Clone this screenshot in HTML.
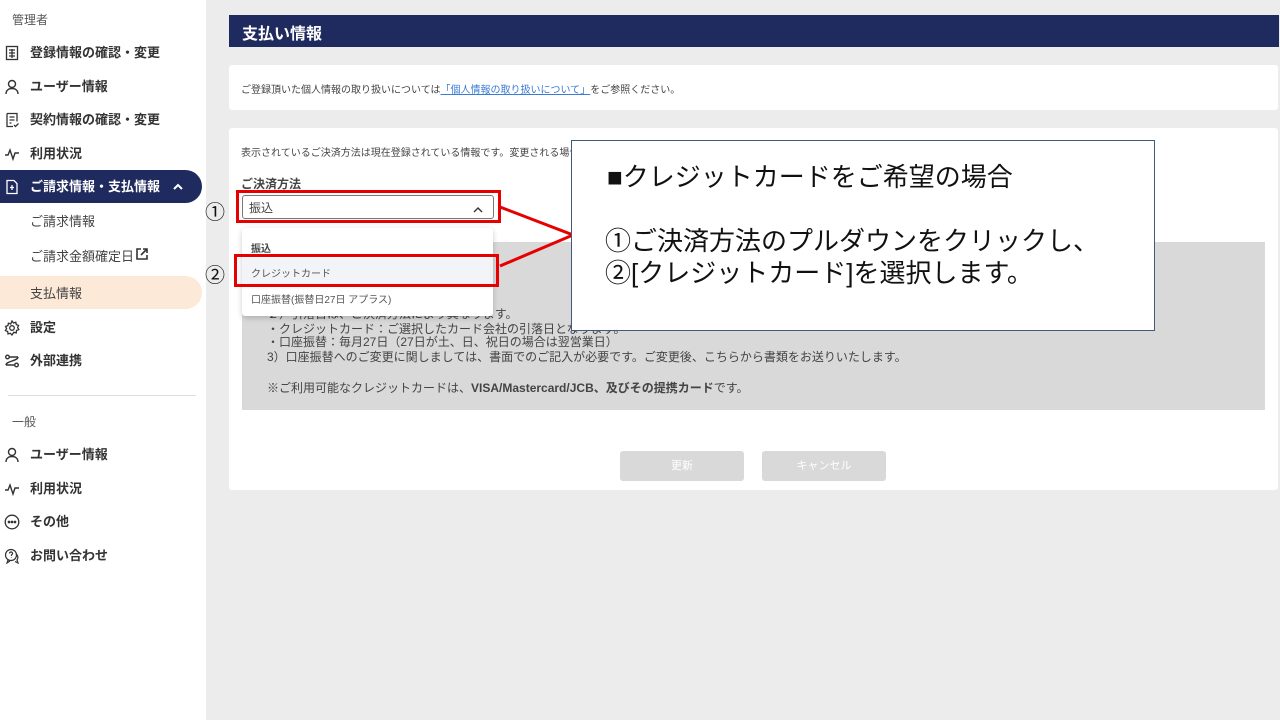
<!DOCTYPE html>
<html><head><meta charset="utf-8"><style>
*{margin:0;padding:0;box-sizing:border-box}
body{width:1280px;height:720px;position:relative;overflow:hidden;background:#ececec;font-family:"Liberation Sans","Noto Sans CJK JP",sans-serif;color:#333}
.a{position:absolute;white-space:nowrap}
#sb{position:absolute;left:0;top:0;width:206px;height:720px;background:#fff}
.it{position:absolute;left:30px;font-size:13px;font-weight:bold;color:#333;line-height:16px}
.ic{position:absolute;left:4px;width:16px;height:16px}
.sub{position:absolute;left:30px;font-size:13px;color:#444}
</style></head><body>
<div id="sb">
<div class="a" style="left:12px;top:11px;font-size:12px;color:#555">管理者</div>
<svg class="ic" style="top:45px" viewBox="0 0 16 16" fill="none" stroke="#333" stroke-width="1.3"><rect x="2.5" y="1.5" width="11" height="13"/><path d="M5 5h6M5 8h6M5 11h6M8 4v9"/></svg>
<div class="it" style="top:45px">登録情報の確認・変更</div>
<svg class="ic" style="top:79px" viewBox="0 0 16 16" fill="none" stroke="#333" stroke-width="1.4"><circle cx="8" cy="5" r="3.5"/><path d="M2 15c0-4 3-5.5 6-5.5s6 1.5 6 5.5"/></svg>
<div class="it" style="top:79px">ユーザー情報</div>
<svg class="ic" style="top:112px" viewBox="0 0 16 16" fill="none" stroke="#333" stroke-width="1.3"><path d="M3 1.5h10v8M3 1.5v13h6M5.5 5h5M5.5 8h5M5.5 11h2M10 13l1.5 1.5 3-3"/></svg>
<div class="it" style="top:112px">契約情報の確認・変更</div>
<svg class="ic" style="top:146px" viewBox="0 0 16 16" fill="none" stroke="#333" stroke-width="1.4"><path d="M1 9h3l2-5 3 9 2-6h4"/></svg>
<div class="it" style="top:146px">利用状況</div>
<div class="a" style="left:0;top:170px;width:202px;height:33px;background:#1f2a5e;border-radius:0 17px 17px 0"></div>
<svg class="ic" style="top:179px" viewBox="0 0 16 16" fill="none" stroke="#fff" stroke-width="1.3"><path d="M3 1.5h7l3 3v10H3z"/><path d="M8 6v5M6 8.5h4"/></svg>
<div class="it" style="top:179px;color:#fff">ご請求情報・支払情報</div>
<svg class="a" style="left:172px;top:182px" width="12" height="10" viewBox="0 0 12 10" fill="none" stroke="#fff" stroke-width="2"><path d="M2 7l4-4 4 4"/></svg>
<div class="sub" style="top:211px">ご請求情報</div>
<div class="sub" style="top:246px">ご請求金額確定日</div>
<svg class="a" style="left:135px;top:247px" width="14" height="14" viewBox="0 0 14 14" fill="none" stroke="#333" stroke-width="1.6"><path d="M6 2H2v10h10V8M8 2h4v4M12 2L6 8"/></svg>
<div class="a" style="left:0;top:276px;width:202px;height:33px;background:#fde9d8;border-radius:0 17px 17px 0"></div>
<div class="sub" style="top:283px">支払情報</div>
<svg class="ic" style="top:320px" viewBox="0 0 16 16" fill="none" stroke="#333" stroke-width="1.3"><circle cx="8" cy="8" r="2.3"/><path d="M8 1l1.5 2 2.3-.8.5 2.4 2.3.8-1 2.2 1.2 2-2.3.9-.3 2.4-2.4-.6L8 15l-1.6-1.7-2.4.6-.3-2.4L1.4 10.6l1.2-2-1-2.2 2.3-.8.5-2.4 2.3.8z"/></svg>
<div class="it" style="top:320px">設定</div>
<svg class="ic" style="top:353px" viewBox="0 0 16 16" fill="none" stroke="#333" stroke-width="1.4"><path d="M14 4H5M2 12h9"/><circle cx="3.5" cy="4" r="1.8"/><circle cx="12.5" cy="12" r="1.8"/><path d="M14 4c0 4-12 4-12 8"/></svg>
<div class="it" style="top:353px">外部連携</div>
<div class="a" style="left:8px;top:395px;width:188px;height:1px;background:#ddd"></div>
<div class="a" style="left:12px;top:413px;font-size:12px;color:#555">一般</div>
<svg class="ic" style="top:447px" viewBox="0 0 16 16" fill="none" stroke="#333" stroke-width="1.4"><circle cx="8" cy="5" r="3.5"/><path d="M2 15c0-4 3-5.5 6-5.5s6 1.5 6 5.5"/></svg>
<div class="it" style="top:447px">ユーザー情報</div>
<svg class="ic" style="top:481px" viewBox="0 0 16 16" fill="none" stroke="#333" stroke-width="1.4"><path d="M1 9h3l2-5 3 9 2-6h4"/></svg>
<div class="it" style="top:481px">利用状況</div>
<svg class="ic" style="top:514px" viewBox="0 0 16 16" fill="none" stroke="#333" stroke-width="1.3"><circle cx="8" cy="8" r="6.8"/><circle cx="5" cy="8" r=".7" fill="#333"/><circle cx="8" cy="8" r=".7" fill="#333"/><circle cx="11" cy="8" r=".7" fill="#333"/></svg>
<div class="it" style="top:514px">その他</div>
<svg class="ic" style="top:548px" viewBox="0 0 16 16" fill="none" stroke="#333" stroke-width="1.2"><circle cx="7" cy="7" r="5.5"/><path d="M5.5 5.5a1.5 1.5 0 1 1 2 1.4V8M7.5 9.5v.5M4 12l-1 3 3-2M12 6c2 1 2.5 4 1 6l1 3-3-1.5"/></svg>
<div class="it" style="top:548px">お問い合わせ</div>
</div>

<div class="a" style="left:229px;top:15px;width:1050px;height:32px;background:#1f2a5e"></div>
<div class="a" style="left:242px;top:20px;font-size:16px;font-weight:bold;color:#fff">支払い情報</div>

<div class="a" style="left:229px;top:65px;width:1049px;height:45px;background:#fff;border-radius:3px"></div>
<div class="a" style="left:241px;top:81px;font-size:10px;color:#444">ご登録頂いた個人情報の取り扱いについては<span style="color:#3a7bd5;text-decoration:underline">「個人情報の取り扱いについて」</span>をご参照ください。</div>

<div class="a" style="left:229px;top:128px;width:1049px;height:362px;background:#fff;border-radius:3px"></div>
<div class="a" style="left:241px;top:144px;font-size:10px;color:#444">表示されているご決済方法は現在登録されている情報です。変更される場合は</div>
<div class="a" style="left:241px;top:175px;font-size:12px;font-weight:bold;color:#444">ご決済方法</div>
<div class="a" style="left:242px;top:195px;width:252px;height:24px;border:1px solid #777;border-radius:3px;background:#fff"></div>
<div class="a" style="left:249px;top:199px;font-size:12px;color:#444">振込</div>
<svg class="a" style="left:472px;top:205px" width="12" height="8" viewBox="0 0 12 8" fill="none" stroke="#333" stroke-width="1.4"><path d="M2 7l4-4 4 4"/></svg>

<div class="a" style="left:242px;top:242px;width:1023px;height:168px;background:#d9d9d9"></div>
<div class="a" style="left:267px;top:291px;font-size:12px;color:#444;line-height:15px">からの適用と</div>
<div class="a" style="left:267px;top:307px;font-size:12px;color:#444;line-height:15px">２）引落日は、ご決済方法により異なります。</div>
<div class="a" style="left:267px;top:322px;font-size:12px;color:#444;line-height:15px">・クレジットカード：ご選択したカード会社の引落日となります。</div>
<div class="a" style="left:267px;top:335px;font-size:12px;color:#444;line-height:15px">・口座振替：毎月27日（27日が土、日、祝日の場合は翌営業日）</div>
<div class="a" style="left:267px;top:350px;font-size:12px;color:#444;line-height:15px">3）口座振替へのご変更に関しましては、書面でのご記入が必要です。ご変更後、こちらから書類をお送りいたします。</div>
<div class="a" style="left:267px;top:381px;font-size:12px;color:#444;line-height:15px">※ご利用可能なクレジットカードは、<b>VISA/Mastercard/JCB、及びその提携カード</b>です。</div>

<div class="a" style="left:242px;top:228px;width:251px;height:88px;background:#fff;box-shadow:0 2px 6px rgba(0,0,0,.2);border-radius:3px"></div>
<div class="a" style="left:251px;top:240px;font-size:10px;font-weight:bold;color:#444">振込</div>
<div class="a" style="left:242px;top:258px;width:251px;height:27px;background:#f3f4f8"></div>
<div class="a" style="left:251px;top:265px;font-size:10px;color:#555">クレジットカード</div>
<div class="a" style="left:251px;top:291px;font-size:10px;color:#555">口座振替(振替日27日 アプラス)</div>

<div class="a" style="left:620px;top:451px;width:124px;height:30px;background:#d9d9d9;border-radius:3px;color:#fff;font-size:11px;text-align:center;line-height:30px">更新</div>
<div class="a" style="left:762px;top:451px;width:124px;height:30px;background:#d9d9d9;border-radius:3px;color:#fff;font-size:11px;text-align:center;line-height:30px">キャンセル</div>

<div class="a" style="left:236px;top:190px;width:265px;height:33px;border:3px solid #e60000"></div>
<div class="a" style="left:234px;top:254px;width:265px;height:33px;border:3px solid #e60000"></div>
<svg class="a" style="left:0;top:0" width="1280" height="720"><path d="M500 207L573 235L500 266" fill="none" stroke="#e60000" stroke-width="3"/></svg>
<div class="a" style="left:205px;top:196px;font-size:20px;color:#111">①</div>
<div class="a" style="left:205px;top:259px;font-size:20px;color:#111">②</div>

<div class="a" style="left:571px;top:140px;width:584px;height:191px;background:#fff;border:1px solid #3f5a7a"></div>
<div class="a" style="left:607px;top:160px;font-size:26px;color:#111;line-height:34px">■クレジットカードをご希望の場合</div>
<div class="a" style="left:605px;top:225px;font-size:26px;color:#111;line-height:32px">①ご決済方法のプルダウンをクリックし、<br>②[クレジットカード]を選択します。</div>
</body></html>
